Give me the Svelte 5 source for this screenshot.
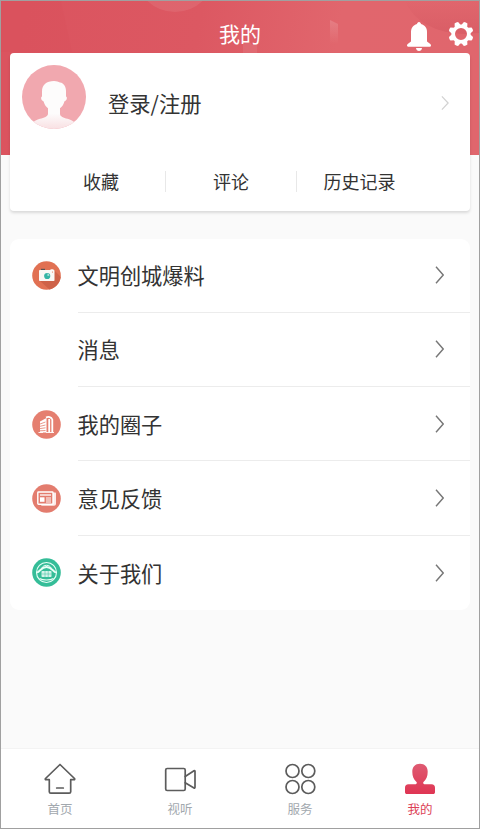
<script lang="ts">
	const stats = ['收藏', '评论', '历史记录'];

	const items = [
		{ label: '文明创城爆料', icon: 'camera' },
		{ label: '消息', icon: '' },
		{ label: '我的圈子', icon: 'building' },
		{ label: '意见反馈', icon: 'news' },
		{ label: '关于我们', icon: 'about' }
	];

	const tabs = [
		{ label: '首页', icon: 'home' },
		{ label: '视听', icon: 'video' },
		{ label: '服务', icon: 'grid' },
		{ label: '我的', icon: 'user' }
	];

	let active = $state('user');

	// eight teeth of the settings gear
	const teeth = [0, 45, 90, 135, 180, 225, 270, 315];
</script>

<div class="app">
	<header>
		<svg class="decor" width="478" height="154" viewBox="1 1 478 154">
			<defs>
				<linearGradient id="glow" x1="0" y1="0" x2="0" y2="1">
					<stop offset="0" stop-color="#fff" stop-opacity="0.16" />
					<stop offset="1" stop-color="#fff" stop-opacity="0" />
				</linearGradient>
				<linearGradient id="shade" x1="0" y1="0" x2="0" y2="1">
					<stop offset="0" stop-color="#c94a55" stop-opacity="0" />
					<stop offset="1" stop-color="#c94a55" stop-opacity="0.3" />
				</linearGradient>
			</defs>
			<circle cx="175" cy="-28" r="40" fill="#fff" opacity="0.08" />
			<path d="M61 1 72 52H1V1z" fill="#d94d59" opacity="0.18" />
			<path d="M405 1c9 20 29 32 60 33l14-1V1z" fill="url(#shade)" />
			<path d="M330 20l8 4v20h-8z" fill="url(#glow)" />
			<path d="M243 44l6-3 3 4 5-2v10h-14z" fill="#fff" opacity="0.08" />
		</svg>
		<h1>我的</h1>
		<div class="actions">
			<svg width="24" height="30" viewBox="0 0 24 30" fill="#fff">
				<path d="M12 0c1.200 0 1.800 1 2 2 4 1.100 6 4 6 8v9.500l3.300 2.500c.5.400.7 1 .7 1.500 0 .8-.4 1.200-1.200 1.200H1.200c-.8 0-1.200-.4-1.200-1.200 0-.5.2-1.100.7-1.500L4 19.500V10c0-4 2-6.900 6-8 .2-1 .8-2 2-2z" />
				<path d="M9 26h6c-.2 1.900-1.400 3-3 3s-2.800-1.100-3-3z" />
			</svg>
			<svg width="26" height="26" viewBox="-13 -13 26 26">
				<circle r="7.800" fill="none" stroke="#fff" stroke-width="3.600" />
				{#each teeth as angle}
					<path d="M-3.200-8.500-1.900-12.200q1.900-.7 3.800 0L3.200-8.500z" fill="#fff" transform="rotate({angle + 22.5})" />
				{/each}
			</svg>
		</div>
	</header>

	<section class="card">
		<div class="login">
			<svg class="avatar" width="64" height="64" viewBox="0 0 64 64">
				<defs>
					<clipPath id="round"><circle cx="32" cy="32" r="32" /></clipPath>
					<linearGradient id="person" x1="0" y1="0" x2="0" y2="1">
						<stop offset="0.65" stop-color="#fdfcfc" />
						<stop offset="1" stop-color="#f8dcdf" />
					</linearGradient>
				</defs>
				<circle cx="32" cy="32" r="32" fill="#f1a8af" />
				<path
					clip-path="url(#round)"
					fill="url(#person)"
					d="M32 16c3 0 4 1.200 6 1.400 4 .5 6 4.600 6 9v5c1.300.3 1 3-.2 4.200-.5.600-1.200.4-1.500 1.200-1 3.200-2.300 5-4.300 6.500v5.400c0 3 3.500 3.800 7.500 5.100 3 1 6 2.400 8 4.600V66H10v-7.600c2-2.200 5-3.600 8-4.600 4-1.300 8-2.200 8-5.100v-5.400c-2-1.500-3.300-3.300-4.300-6.500-.3-.8-1-.6-1.500-1.200-1.200-1.200-1.500-3.900-.2-4.200v-5C20 20 24.500 16 32 16z"
				/>
			</svg>
			<span>登录/注册</span>
			<svg class="arrow pale" width="9" height="18" viewBox="0 0 9 18"><path d="M1 1.500 8 9 1 16.500" /></svg>
		</div>
		<div class="stats">
			{#each stats as stat}
				<div class="stat">{stat}</div>
			{/each}
		</div>
	</section>

	<ul class="menu">
		{#each items as item}
			<li>
				<div class="icon">
					{#if item.icon}
						<svg width="29" height="29" viewBox="0 0 29 29">
							{#if item.icon === 'camera'}
								<circle cx="14.500" cy="14.500" r="14.300" fill="#e17153" />
								<path d="M22.500 9.500 28.700 16c-.9 6-5.200 11-11.200 12.500L7.500 19.500z" fill="#ce6248" />
								<rect x="9" y="7.800" width="4" height="1.500" fill="#555" />
								<rect x="7" y="9" width="15.500" height="11" rx="0.800" fill="#faf8f5" />
								<path d="M18.500 8.300h3v1h-3z" fill="#fff" />
								<circle cx="15.200" cy="15" r="3.100" fill="#35b5a5" />
								<path d="M15.500 12.600a2.400 2.400 0 0 1 2 2l-2 .4z" fill="#b6e4de" />
								<circle cx="20.500" cy="11" r="0.600" fill="#e17153" />
							{:else if item.icon === 'building'}
								<circle cx="14.500" cy="14.500" r="14.300" fill="#e57f70" />
								<path d="M8 11.500 14.500 8v14.500H8z" fill="#fff" />
								<path d="M8 14l5.500-2M8 16.300l5.500-1.300M8 18.600l5.500-.8M8 20.800l5.500-.3" stroke="#e57f70" stroke-width="0.800" />
								<path d="M14 7.500c2.500-1.200 5.300-.4 6.300 2v13" fill="none" stroke="#fff" stroke-width="1.800" />
								<path d="M17.200 9v13.500" stroke="#fff" stroke-width="1.800" />
								<path d="M6.500 22.500H11M14 22.500h8" stroke="#fff" stroke-width="0.900" />
							{:else if item.icon === 'news'}
								<circle cx="14.500" cy="14.500" r="14.300" fill="#e37c6e" />
								<path d="M19.500 8.500h3.700c.6 0 .8.400.8 1v10.300c0 1.300-.8 2-2 2H9.500l-1-2z" fill="#fff" opacity="0.850" />
								<rect x="5.800" y="8" width="15.200" height="12.300" rx="0.700" fill="#e37c6e" stroke="#fff" stroke-width="1.400" />
								<path d="M8 11h11" stroke="#fff" stroke-width="1.300" />
								<rect x="8" y="13.300" width="4.500" height="4.500" fill="#fff" />
								<path d="M14 14h5M14 16h5M14 18h5" stroke="#fff" stroke-width="1" />
							{:else}
								<circle cx="14.500" cy="14.500" r="14.300" fill="#35bd98" />
								<g fill="none" stroke="#eafff8">
									<circle cx="14.500" cy="14.500" r="10" stroke-width="1.100" />
									<path d="M5 14.500c3-1 4.500-5.500 9.500-5.500s6.500 4.500 9.500 5.500" stroke-width="1.800" />
									<path d="M9.500 10.500c1-2 2.700-3.200 5-3.200s4 1.200 5 3.200" stroke-width="1" />
									<path d="M7.500 20.500c3.500 2 10.500 2 14 0" stroke-width="1.200" />
								</g>
								<rect x="9.500" y="13" width="10" height="6" rx="0.800" fill="#d5f3ea" />
								<path d="M9.500 16h10M13 13v6M16.200 13v6" stroke="#35bd98" stroke-width="0.500" />
							{/if}
						</svg>
					{/if}
				</div>
				<div class="row">
					<span>{item.label}</span>
					<svg class="arrow" width="9" height="18" viewBox="0 0 9 18"><path d="M1 .8 8.200 9 1 17.200" /></svg>
				</div>
			</li>
		{/each}
	</ul>

	<nav>
		{#each tabs as tab}
			<button class:active={active === tab.icon} onclick={() => (active = tab.icon)}>
				<svg width="32" height="32" viewBox="0 0 32 32" fill="none" stroke="#5c5c5c" stroke-width="1.700" stroke-linejoin="round" stroke-linecap="round">
					{#if tab.icon === 'home'}
						<path d="M16 1.500 1.500 15.500c-.5.600-.2 1.200.5 1.200h3.300v12c0 1 .5 1.500 1.500 1.500h18.400c1 0 1.500-.5 1.500-1.500v-12H30c.7 0 1-.6.500-1.200z" />
						<path d="M12.700 25h6.600" />
					{:else if tab.icon === 'video'}
						<rect x="1.700" y="5.500" width="19.500" height="22" rx="1.500" />
						<path d="M21.200 13.500 30 7.800c.6-.4 1 0 1 .5v16c0 .6-.4.900-1 .6l-8.800-5.200" />
					{:else if tab.icon === 'grid'}
						<circle cx="8.500" cy="8" r="6.500" />
						<circle cx="24.300" cy="8" r="6.500" />
						<circle cx="8.500" cy="24" r="6.500" />
						<circle cx="24.300" cy="24" r="6.500" />
					{:else}
						<defs>
							<linearGradient id="me" x1="0" y1="0" x2="0" y2="1">
								<stop offset="0" stop-color="#df5b72" />
								<stop offset="1" stop-color="#df3553" />
							</linearGradient>
						</defs>
						<path
							stroke="none"
							fill="url(#me)"
							d="M16 .8c4.800 0 7.700 3.200 7.700 8 0 4.600-1.500 8-4.200 10.200-.7.700-.3 2 .8 2.200h7.200c2.300 0 3.500 1.300 3.500 3.500v4.200c0 1.400-.7 2.100-2 2.100H3c-1.300 0-2-.7-2-2.100v-4.200c0-2.200 1.200-3.500 3.500-3.500h7.200c1.100-.2 1.500-1.500.8-2.200C9.800 16.800 8.300 13.400 8.300 8.800c0-4.800 2.900-8 7.700-8z"
						/>
					{/if}
				</svg>
				<span>{tab.label}</span>
			</button>
		{/each}
	</nav>
</div>

<style>
	:global(body) {
		margin: 0;
	}

	.app {
		box-sizing: border-box;
		width: 480px;
		height: 829px;
		border: 1px solid #a0a0a0;
		display: flex;
		flex-direction: column;
		overflow: hidden;
		background: #fafafa;
		color: #333;
		font-family: 'Noto Sans CJK SC', sans-serif;
	}

	svg {
		display: block;
		flex-shrink: 0;
	}

	header {
		position: relative;
		flex: none;
		height: 153.500px;
		display: flex;
		justify-content: center;
		background: linear-gradient(100deg, #db545f 5%, #dc5862 40%, #e1666d 68%, #e0666d 100%);
	}

	.decor {
		position: absolute;
		inset: 0;
	}

	h1 {
		position: relative;
		margin: 17px 0 0;
		height: 30px;
		line-height: 30px;
		font-size: 21px;
		font-weight: 400;
		color: #fff;
	}

	.actions {
		position: absolute;
		right: 5px;
		top: 20px;
		display: flex;
		gap: 17px;
	}

	.actions svg:first-child {
		margin-top: 1px;
	}

	.card {
		position: relative;
		flex: none;
		box-sizing: border-box;
		height: 158.500px;
		margin: -102px 9px 0;
		padding: 12.500px 20px 0 12px;
		border-radius: 4px;
		background: #fff;
		box-shadow: 0 2px 3px rgba(0, 0, 0, 0.13);
	}

	.login {
		display: flex;
		align-items: center;
		gap: 22px;
		height: 64px;
		font-size: 21.300px;
	}

	.login span {
		flex: 1;
		padding-top: 11px;
		line-height: 30px;
	}

	.arrow {
		fill: none;
		stroke: #777;
		stroke-width: 1.400;
	}

	.arrow.pale {
		stroke: #d2d2d2;
		margin: 11px 1px 0 0;
		width: 8px;
		height: 16px;
	}

	.stats {
		display: grid;
		grid-template-columns: 128px 131px 126px;
		margin: 42px 0 0 15px;
		font-size: 18px;
		line-height: 21px;
	}

	.stat {
		text-align: center;
	}

	.stat + .stat {
		border-left: 1px solid #e8e8e8;
	}

	.menu {
		flex: none;
		list-style: none;
		margin: 27.500px 9px 0;
		padding: 0;
		height: 371.500px;
		display: flex;
		flex-direction: column;
		border-radius: 9px;
		background: #fff;
	}

	li {
		flex: 1;
		display: flex;
	}

	.icon {
		width: 67.500px;
		display: flex;
		align-items: center;
		padding-left: 22px;
		box-sizing: border-box;
	}

	.row {
		flex: 1;
		display: flex;
		align-items: center;
		justify-content: space-between;
		padding-right: 26px;
		font-size: 21.200px;
		border-bottom: 1px solid #ececec;
	}

	.row span {
		margin-top: -1px;
	}

	li:last-child .row {
		border-bottom: none;
	}

	nav {
		flex: none;
		display: flex;
		height: 80px;
		margin: auto -1px 0;
		background: #fff;
		border-top: 1px solid #f3f3f3;
		box-sizing: border-box;
	}

	button {
		flex: 1;
		display: flex;
		flex-direction: column;
		align-items: center;
		gap: 4px;
		padding: 14px 0 0;
		border: none;
		background: none;
		font-family: inherit;
		font-size: 12.500px;
		line-height: 20px;
		color: #a2a8ae;
	}

	button.active {
		color: #dc4056;
	}
</style>
